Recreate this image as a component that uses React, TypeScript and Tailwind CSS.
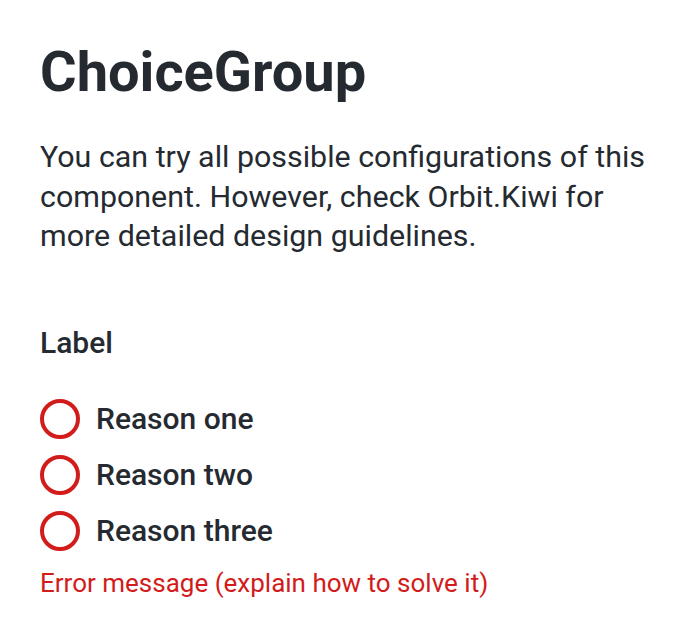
import React from "react";

function Radio({ label }: { label: string }) {
  return (
    <label className="flex items-center h-[56px] gap-4">
      <span className="w-10 h-10 rounded-full border-[4px] border-[#d21c1c] bg-white shrink-0" />
      <span className="text-[30px] font-medium text-[#252a31] leading-[40px]">{label}</span>
    </label>
  );
}

export default function App() {
  return (
    <div className="bg-white min-h-[640px] px-10 pt-[36px]" style={{ fontFamily: "Roboto, sans-serif" }}>
      <h1 className="text-[56px] font-bold text-[#252a31] leading-[72px]">ChoiceGroup</h1>
      <p className="mt-[29px] text-[30.4px] leading-[39.5px] text-[#252a31] w-[620px]">
        You can try all possible configurations of this component. However, check Orbit.Kiwi for more detailed design guidelines.
      </p>
      <div className="mt-[67px]">
        <div className="text-[30px] font-medium text-[#252a31] leading-[40px] mb-[28px]">Label</div>
        <Radio label="Reason one" />
        <Radio label="Reason two" />
        <Radio label="Reason three" />
        <div className="text-[26px] text-[#d21c1c] leading-[32px] mt-[8px]">Error message (explain how to solve it)</div>
      </div>
    </div>
  );
}
